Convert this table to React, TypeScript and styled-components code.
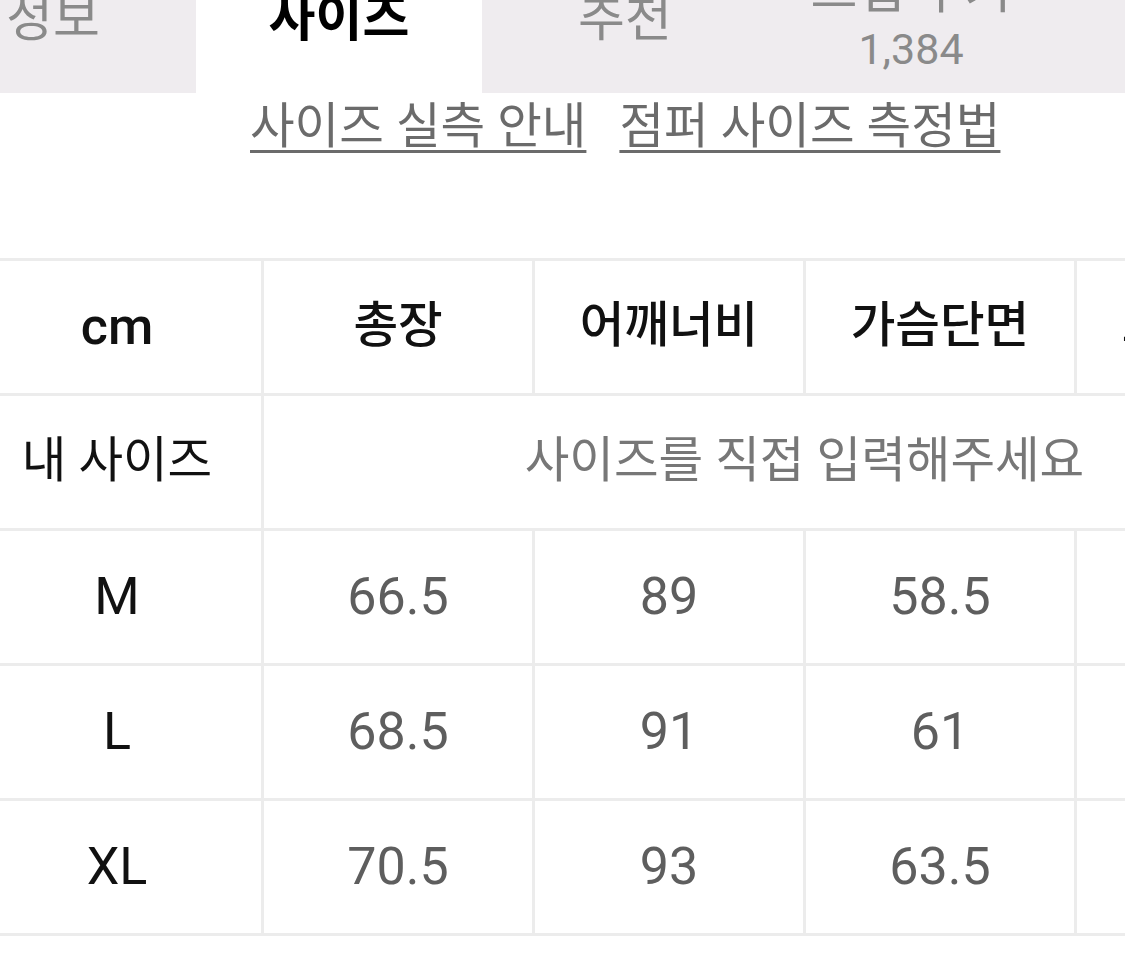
import React from "react";
import styled, { createGlobalStyle } from "styled-components";

const GlobalStyle = createGlobalStyle`
  html, body {
    margin: 0;
    padding: 0;
    background: #ffffff;
  }
  body {
    font-family: Roboto, "Noto Sans CJK KR", sans-serif;
    -webkit-font-smoothing: antialiased;
  }
`;

const Page = styled.div`
  width: 1125px;
  height: 978px;
  overflow: hidden;
  background: #ffffff;
  display: flex;
  flex-direction: column;
`;

const TabBar = styled.nav`
  display: flex;
  flex-shrink: 0;
  height: 148px;
  margin-top: -55px;
  margin-left: -90px;
`;

const Tab = styled.div<{ $active?: boolean; $stacked?: boolean }>`
  flex: 0 0 286px;
  height: 100%;
  box-sizing: border-box;
  display: flex;
  flex-direction: column;
  align-items: center;
  justify-content: center;
  padding-top: ${(p) => (p.$stacked ? "2px" : "0")};
  background: ${(p) => (p.$active ? "#ffffff" : "#efecef")};
  color: ${(p) => (p.$active ? "#000000" : "#8a8a8a")};
  font-size: 51px;
  font-weight: ${(p) => (p.$active ? 700 : 400)};
  line-height: 58px;
  white-space: nowrap;
`;

const TabCount = styled.span`
  font-size: 43px;
  line-height: 58px;
  color: #8a8a8a;
`;

const GuideLinks = styled.div`
  display: flex;
  gap: 33px;
  padding-left: 250px;
  margin-top: 10px;
`;

const GuideLink = styled.a`
  font-size: 48.5px;
  line-height: 48.5px;
  color: #6b6b6b;
  text-decoration: underline;
  text-decoration-thickness: 3px;
  text-underline-offset: 7px;
  text-decoration-color: #6b6b6b;
  white-space: nowrap;
  cursor: pointer;
`;

const SizeTable = styled.div`
  display: grid;
  grid-template-columns: 288px repeat(4, 268px);
  grid-auto-rows: 132px;
  gap: 3px;
  padding: 3px 0;
  margin-top: 106px;
  margin-left: -27px;
  width: max-content;
  background: #ececec;
`;

type Tone = "head" | "unit" | "label" | "labelKo" | "value" | "hint";

const toneStyles: Record<Tone, string> = {
  head: "font-size: 48.5px; font-weight: 500; color: #111111;",
  unit: "font-size: 52px; font-weight: 500; color: #111111;",
  label: "font-size: 52px; font-weight: 400; color: #111111;",
  labelKo: "font-size: 48.5px; font-weight: 400; color: #111111;",
  value: "font-size: 52px; font-weight: 400; color: #5e5e5e;",
  hint: "font-size: 48.5px; font-weight: 400; color: #777777;",
};

const Cell = styled.div<{ $tone: Tone; $span?: number }>`
  background: #ffffff;
  display: flex;
  align-items: center;
  justify-content: center;
  white-space: nowrap;
  line-height: 1;
  grid-column: ${(p) => (p.$span ? `span ${p.$span}` : "auto")};
  ${(p) => toneStyles[p.$tone]}
`;

const headers = ["총장", "어깨너비", "가슴단면", "소매길이"];

const rows: { size: string; values: string[] }[] = [
  { size: "M", values: ["66.5", "89", "58.5", ""] },
  { size: "L", values: ["68.5", "91", "61", ""] },
  { size: "XL", values: ["70.5", "93", "63.5", ""] },
];

export default function App() {
  return (
    <>
      <GlobalStyle />
      <Page>
        <TabBar>
          <Tab>정보</Tab>
          <Tab $active>사이즈</Tab>
          <Tab>추천</Tab>
          <Tab $stacked>
            <span>스냅·후기</span>
            <TabCount>1,384</TabCount>
          </Tab>
          <Tab>문의</Tab>
        </TabBar>

        <GuideLinks>
          <GuideLink>사이즈 실측 안내</GuideLink>
          <GuideLink>점퍼 사이즈 측정법</GuideLink>
        </GuideLinks>

        <SizeTable>
          <Cell $tone="unit">cm</Cell>
          {headers.map((h) => (
            <Cell key={h} $tone="head">
              {h}
            </Cell>
          ))}

          <Cell $tone="labelKo">내 사이즈</Cell>
          <Cell $tone="hint" $span={4}>
            사이즈를 직접 입력해주세요
          </Cell>

          {rows.map((r) => (
            <React.Fragment key={r.size}>
              <Cell $tone="label">{r.size}</Cell>
              {r.values.map((v, i) => (
                <Cell key={i} $tone="value">
                  {v}
                </Cell>
              ))}
            </React.Fragment>
          ))}
        </SizeTable>
      </Page>
    </>
  );
}
